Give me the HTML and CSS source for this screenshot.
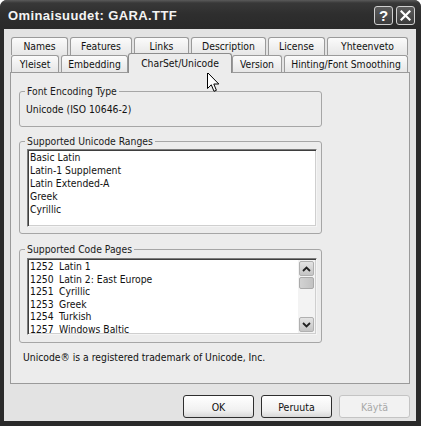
FILE: index.html
```html
<!DOCTYPE html>
<html>
<head>
<meta charset="utf-8">
<title>Ominaisuudet: GARA.TTF</title>
<link rel="stylesheet" href="styles.css">
</head>
<body>
<div class="window">
  <div class="titlebar">
    <span class="title">Ominaisuudet: GARA.TTF</span>
    <div class="tbtns">
      <span class="tbtn help">?</span>
      <span class="tbtn close"><svg width="11" height="11" viewBox="0 0 11 11"><path d="M1.5 1.5 L9.5 9.5 M9.5 1.5 L1.5 9.5" stroke="#fff" stroke-width="2.2" stroke-linecap="square"/></svg></span>
    </div>
  </div>
  <div class="client">
    <div class="tabs">
      <div class="tabrow back">
        <div class="tab t-names">Names</div>
        <div class="tab t-features">Features</div>
        <div class="tab t-links">Links</div>
        <div class="tab t-desc">Description</div>
        <div class="tab t-license">License</div>
        <div class="tab t-yht">Yhteenveto</div>
      </div>
      <div class="tabrow front">
        <div class="tab t-yleiset">Yleiset</div>
        <div class="tab t-embed">Embedding</div>
        <div class="tab t-charset selected">CharSet/Unicode</div>
        <div class="tab t-version">Version</div>
        <div class="tab t-hinting">Hinting/Font Smoothing</div>
      </div>
    </div>
    <div class="panel">
      <fieldset class="group g1">
        <legend>Font Encoding Type</legend>
        <div class="enc">Unicode (ISO 10646-2)</div>
      </fieldset>
      <fieldset class="group g2">
        <legend>Supported Unicode Ranges</legend>
        <div class="listbox lb1">
          <div class="items">
            <div>Basic Latin</div>
            <div>Latin-1 Supplement</div>
            <div>Latin Extended-A</div>
            <div>Greek</div>
            <div>Cyrillic</div>
          </div>
        </div>
      </fieldset>
      <fieldset class="group g3">
        <legend>Supported Code Pages</legend>
        <div class="listbox lb2">
          <div class="items">
            <div><span class="cp">1252</span>Latin 1</div>
            <div><span class="cp">1250</span>Latin 2: East Europe</div>
            <div><span class="cp">1251</span>Cyrillic</div>
            <div><span class="cp">1253</span>Greek</div>
            <div><span class="cp">1254</span>Turkish</div>
            <div><span class="cp">1257</span>Windows Baltic</div>
          </div>
          <div class="scrollbar">
            <div class="sbtn"><svg width="9" height="6" viewBox="0 0 9 6"><path d="M1 5 L4.5 1.5 L8 5" fill="none" stroke="#222" stroke-width="1.8"/></svg></div>
            <div class="thumb"></div>
            <div class="track"></div>
            <div class="sbtn"><svg width="9" height="6" viewBox="0 0 9 6"><path d="M1 1 L4.5 4.5 L8 1" fill="none" stroke="#222" stroke-width="1.8"/></svg></div>
          </div>
        </div>
      </fieldset>
      <p class="note">Unicode® is a registered trademark of Unicode, Inc.</p>
    </div>
    <div class="buttons">
      <button class="btn">OK</button>
      <button class="btn">Peruuta</button>
      <button class="btn disabled">Käytä</button>
    </div>
  </div>
  <svg class="cursor" width="13" height="21" viewBox="0 0 13 21"><path d="M0.5 0.5 L0.5 16.5 L4.3 12.8 L7 19.3 L9.4 18.3 L6.8 12 L11.8 12 Z" fill="#fff" stroke="#000" stroke-width="1" stroke-linejoin="miter"/></svg>
</div>
</body>
</html>
```

FILE: styles.css
```css
* { box-sizing: border-box; }
html, body { margin: 0; padding: 0; }
body {
  width: 421px;
  height: 426px;
  overflow: hidden;
  background: #ffffff;
  font-family: "DejaVu Sans Condensed", "DejaVu Sans", sans-serif;
  font-size: 10.3px;
  color: #111;
}
.window {
  position: relative;
  width: 421px;
  height: 426px;
  background: #2a2a2a;
  border-radius: 7px 7px 0 0;
  display: flex;
  flex-direction: column;
}
.titlebar {
  height: 29px;
  flex: none;
  display: flex;
  align-items: center;
  justify-content: space-between;
  padding: 0 6px 0 8px;
  border-radius: 7px 7px 0 0;
  background: linear-gradient(#5a5a5a 0, #383838 3px, #2e2e2e 50%, #2a2a2a 100%);
}
.title {
  color: #f4f4f4;
  font-family: "Liberation Sans", sans-serif;
  font-weight: bold;
  font-size: 13px;
  letter-spacing: 0.4px;
  padding-top: 1px;
}
.tbtns { display: flex; gap: 3px; padding-top: 1px; }
.tbtn {
  width: 19px;
  height: 19px;
  border: 1px solid #d0d0d0;
  border-radius: 3px;
  background: linear-gradient(#5c5c5c, #3c3c3c);
  display: flex;
  align-items: center;
  justify-content: center;
  color: #fff;
  font-family: "Liberation Sans", sans-serif;
  font-weight: bold;
  font-size: 15px;
  line-height: 1;
}
.client {
  flex: 1;
  margin: 0 5px 5px 4px;
  background: #e3e3e3;
  padding-top: 8px;
  display: flex;
  flex-direction: column;
}
.tabs { padding-left: 7px; }
.tabrow { display: flex; align-items: flex-start; }
.tabrow.back { height: 18px; }
.tabrow.front { height: 17px; }
.tab {
  flex: none;
  height: 18px;
  border: 1px solid #9a9a9a;
  border-bottom: none;
  border-radius: 3px 3px 0 0;
  background: linear-gradient(#fbfbfb, #e6e6e6);
  text-align: center;
  line-height: 17px;
  white-space: nowrap;
  color: #111;
}
.back .tab { margin-right: 2px; }
.back .tab:last-child { margin-right: 0; }
.front .tab { height: 17px; line-height: 16px; }
.t-names { width: 57px; }
.t-features { width: 62px; }
.t-links { width: 55px; }
.t-desc { width: 75px; }
.t-license { width: 57px; }
.t-yht { width: 81px; }
.t-yleiset { width: 48px; margin-right: 2px; }
.t-embed { width: 67px; }
.t-charset { width: 104px; }
.t-version { width: 50px; margin-right: 2px; }
.t-hinting { width: 124px; }
.tab.selected {
  position: relative;
  z-index: 2;
  height: 20px;
  margin-top: -2px;
  line-height: 18px;
  background: #ececec;
  border-color: #8c8c8c;
}
.panel {
  margin-left: 6px;
  width: 400px;
  height: 312px;
  border: 1px solid #9a9a9a;
  background: #ececec;
  padding: 12px 0 0 8px;
  display: flex;
  flex-direction: column;
}
.group {
  margin: 0;
  width: 303px;
  min-width: 0;
  border: 1px solid #a6a6a6;
  border-radius: 3px;
  padding: 0 0 0 5px;
}
.group legend {
  padding: 0 2px;
  line-height: 13px;
  color: #1a1a1a;
}
.g1 { padding-top: 5px; padding-bottom: 10px; }
.g2 { margin-top: 8px; padding-top: 1px; padding-bottom: 6px; }
.g3 { margin-top: 9px; padding-top: 2px; padding-bottom: 7px; }
.enc { line-height: 13px; margin-left: 1px; }
.listbox {
  margin-left: 2px;
  width: 290px;
  background: #fff;
  border: 1px solid;
  border-color: #7c7c7c #f4f4f4 #f4f4f4 #7c7c7c;
  box-shadow: inset 1px 1px 0 #3e3e3e, inset -1px -1px 0 #cfcfcf;
  display: flex;
}
.lb1 { height: 78px; }
.lb2 { height: 77px; }
.items { flex: 1; padding: 1px 0 0 2px; }
.lb1 .items div { line-height: 13px; white-space: nowrap; }
.lb2 .items div { line-height: 12.5px; white-space: nowrap; }
.cp { display: inline-block; width: 29px; }
.scrollbar {
  width: 17px;
  margin: 1px 1px 1px 0;
  background: #f3f3f3;
  display: flex;
  flex-direction: column;
  padding: 1px;
}
.sbtn {
  height: 15px;
  flex: none;
  border: 1px solid #b0b0b0;
  border-radius: 2px;
  background: linear-gradient(#e4e4e4, #c4c4c4);
  display: flex;
  align-items: center;
  justify-content: center;
}
.thumb {
  height: 12px;
  flex: none;
  margin-top: 1px;
  border: 1px solid #aaaaaa;
  border-radius: 2px;
  background: linear-gradient(90deg, #d2d2d2, #c2c2c2);
}
.track { flex: 1; }
.note {
  margin: 8px 0 0 4px;
  line-height: 13px;
}
.buttons {
  display: flex;
  justify-content: flex-end;
  gap: 7px;
  margin-top: 11px;
  padding-right: 6px;
}
.btn {
  width: 71px;
  height: 23px;
  border: 1px solid #2e2e2e;
  border-radius: 3px;
  background: linear-gradient(#ffffff, #f0f0f0 70%, #d8d8d8);
  font-family: "DejaVu Sans Condensed", "DejaVu Sans", sans-serif;
  font-size: 10.5px;
  color: #111;
  padding: 0;
}
.btn.disabled {
  border-color: #c4c4c4;
  background: #f2f2f2;
  color: #a8a8a8;
}
.cursor {
  position: absolute;
  left: 207px;
  top: 72px;
}
```
